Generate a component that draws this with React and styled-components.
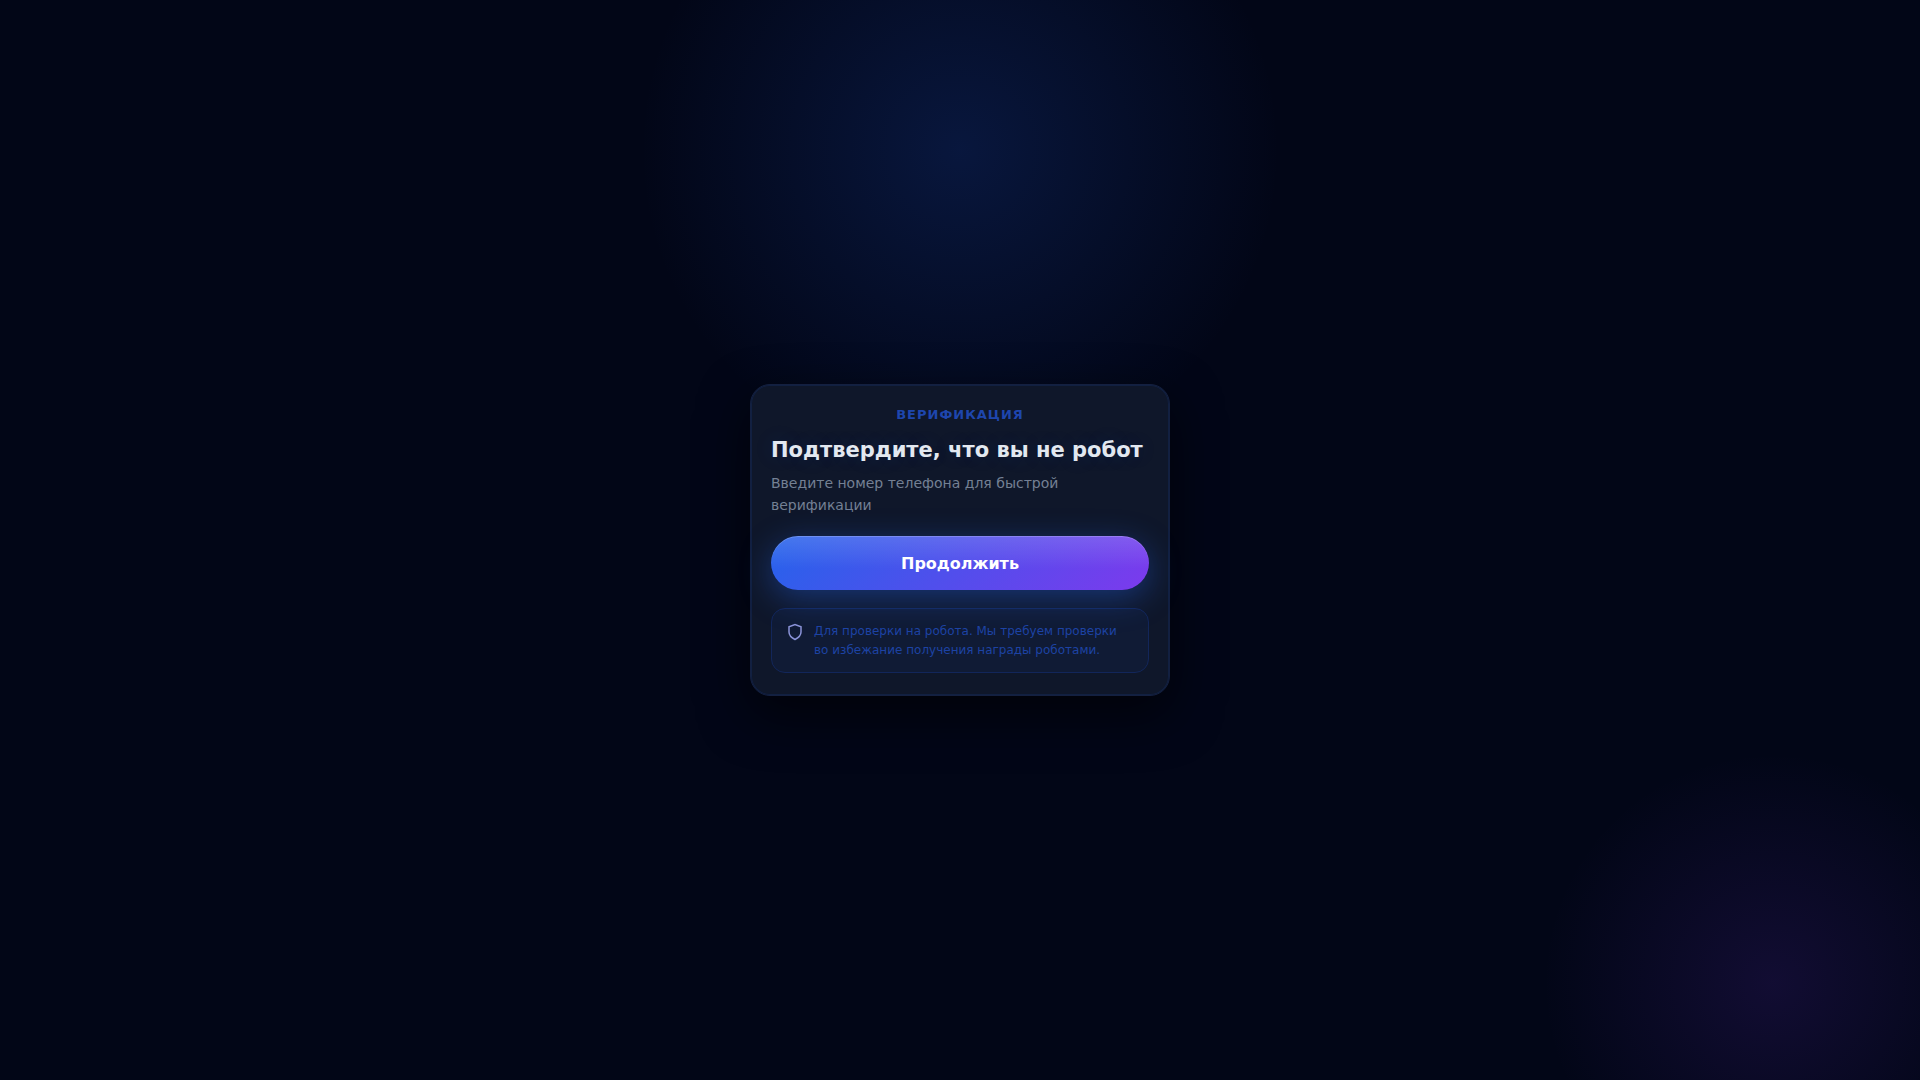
import React from "react";
//styling
import styled, { createGlobalStyle } from "styled-components";

const App = () => {
  return (
    <>
      <GlobalStyle />
      <Page>
        <Card>
          <Eyebrow>Верификация</Eyebrow>
          <Title>Подтвердите, что вы не робот</Title>
          <Subtitle>Введите номер телефона для быстрой верификации</Subtitle>
          <ContinueButton type="button">Продолжить</ContinueButton>
          <Note>
            <ShieldIcon />
            <p>
              Для проверки на робота. Мы требуем проверки во избежание получения
              награды роботами.
            </p>
          </Note>
        </Card>
      </Page>
    </>
  );
};

//shield icon
const ShieldIcon = () => (
  <svg
    width="18"
    height="18"
    viewBox="0 0 24 24"
    fill="none"
    stroke="currentColor"
    strokeWidth="2"
    aria-hidden="true"
  >
    <path d="M12 22s8-4 8-10V5l-8-3-8 3v7c0 6 8 10 8 10z" />
  </svg>
);

const GlobalStyle = createGlobalStyle`
  * {
    margin: 0;
    padding: 0;
    box-sizing: border-box;
  }
  body {
    background: #020617;
    font-family: "DejaVu Sans", sans-serif;
  }
`;

const Page = styled.main`
  min-height: 100vh;
  padding: 20px;
  display: flex;
  align-items: center;
  justify-content: center;
  background: radial-gradient(
      circle 320px at 50% 150px,
      rgba(37, 99, 235, 0.18),
      rgba(37, 99, 235, 0)
    ),
    radial-gradient(
      circle 230px at calc(100% - 147px) calc(100% - 97px),
      rgba(124, 58, 237, 0.13),
      rgba(124, 58, 237, 0)
    );
`;

const Card = styled.section`
  width: 100%;
  max-width: 420px;
  padding: 22px 20px;
  border: 1px solid #142040;
  border-radius: 20px;
  background: #0f172a;
  box-shadow: 0 18px 50px rgba(0, 0, 0, 0.6),
    inset 0 0 0 1px rgba(37, 99, 235, 0.12);
`;

const Eyebrow = styled.p`
  margin-bottom: 13px;
  color: #1e46ae;
  font-size: 13px;
  line-height: 16px;
  font-weight: 700;
  letter-spacing: 1px;
  text-align: center;
  text-transform: uppercase;
`;

const Title = styled.h1`
  margin-bottom: 8px;
  color: #e2e8f0;
  font-size: 21px;
  line-height: 28px;
  font-weight: 700;
  text-shadow: 0 0 20px rgba(37, 99, 235, 0.15);
`;

const Subtitle = styled.p`
  max-width: 320px;
  margin-bottom: 20px;
  color: #748094;
  font-size: 14px;
  line-height: 22px;
`;

const ContinueButton = styled.button`
  width: 100%;
  height: 54px;
  border: none;
  border-radius: 27px;
  background: linear-gradient(
      180deg,
      rgba(255, 255, 255, 0.14),
      rgba(255, 255, 255, 0) 60%
    ),
    linear-gradient(135deg, #2563eb, #7c3aed);
  box-shadow: 0 8px 32px rgba(37, 99, 235, 0.4),
    inset 0 1px 0 rgba(255, 255, 255, 0.2);
  color: #fff;
  font-family: inherit;
  font-size: 16px;
  font-weight: 700;
  cursor: pointer;
`;

const Note = styled.div`
  display: flex;
  gap: 10px;
  margin-top: 18px;
  padding: 13px 14px 12px;
  border: 1px solid #12265a;
  border-radius: 14px;
  background: #101b35;
  color: #1d43a4;
  font-size: 12px;
  line-height: 19px;
  svg {
    flex-shrink: 0;
    margin-top: 1px;
    color: #8a93d8;
  }
`;

export default App;
